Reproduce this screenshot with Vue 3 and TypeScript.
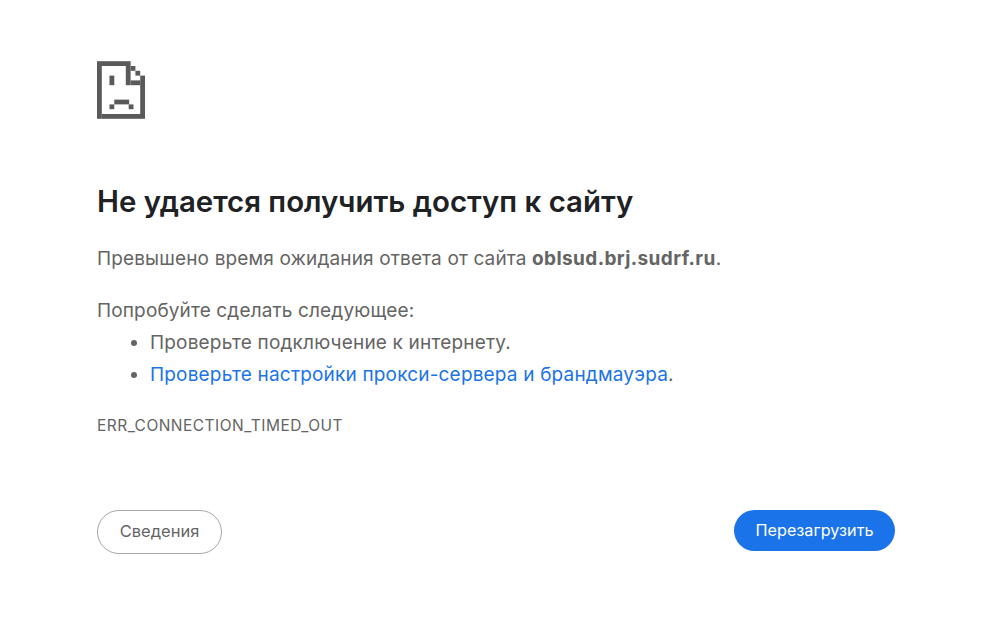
<script setup lang="ts">
const cells: [number, number, number, number][] = [
  [0, 0, 7, 1], [0, 1, 1, 11], [1, 11, 9, 1], [9, 3, 1, 8],
  [6, 1, 1, 4], [7, 1, 1, 1], [8, 2, 1, 1], [7, 4, 2, 1],
  [2.6, 3, 1, 2], [3.6, 8, 3.1, 1], [2.6, 9, 1, 1], [6.6, 9, 1, 1]
]
</script>

<template>
  <main class="page">
    <svg class="icon" viewBox="0 0 10 12" aria-hidden="true">
      <rect v-for="(c, i) in cells" :key="i" :x="c[0]" :y="c[1]" :width="c[2]" :height="c[3]" fill="#5a5a5a" />
    </svg>
    <h1 class="title">Не удается получить доступ к сайту</h1>
    <p class="summary">Превышено время ожидания ответа от сайта <strong>oblsud.brj.sudrf.ru</strong>.</p>
    <p class="try">Попробуйте сделать следующее:</p>
    <ul class="tips">
      <li>Проверьте подключение к интернету.</li>
      <li><a href="#" class="link">Проверьте настройки прокси-сервера и брандмауэра</a>.</li>
    </ul>
    <div class="code">ERR_CONNECTION_TIMED_OUT</div>
    <div class="actions">
      <button class="btn details">Сведения</button>
      <button class="btn reload">Перезагрузить</button>
    </div>
  </main>
</template>

<style>
html, body { background: #ffffff; }
</style>

<style scoped>
.page {
  box-sizing: border-box;
  width: 895px;
  height: 625px;
  padding: 61px 0 0 97px;
  font-family: Inter, "Noto Sans", sans-serif;
  color: #646464;
  font-size: 19px;
  letter-spacing: 0.14px;
  display: flex;
  flex-direction: column;
}
.icon { width: 48px; height: 58px; display: block; }
.title {
  margin: 64px 0 0;
  font-size: 29.4px;
  line-height: 38px;
  font-weight: 600;
  letter-spacing: 0;
  color: #202124;
}
.summary { margin: 25px 0 0; line-height: 26px; }
.summary strong { font-weight: 700; letter-spacing: 0.4px; }
.try { margin: 26px 0 0; line-height: 26px; }
.tips { margin: 3px 0 0; padding: 0 0 0 53px; letter-spacing: 0.18px; }
.tips li { line-height: 32px; }
.link { color: #1a73e8; text-decoration: none; }
.code { margin-top: 25px; font-size: 15.5px; letter-spacing: 0.47px; line-height: 20px; }
.actions { display: flex; justify-content: space-between; margin-top: 74px; align-items: flex-start; }
.btn {
  font-family: inherit;
  letter-spacing: 0;
  border-radius: 22px;
  box-sizing: border-box;
  padding: 0 0 2px;
}
.details {
  width: 125px;
  height: 44px;
  font-size: 16.5px;
  background: #fff;
  color: #646464;
  border: 1.5px solid #a8a8a8;
}
.reload {
  width: 161px;
  height: 41px;
  font-size: 16.2px;
  background: #1a73e8;
  color: #fff;
  border: none;
}
</style>
